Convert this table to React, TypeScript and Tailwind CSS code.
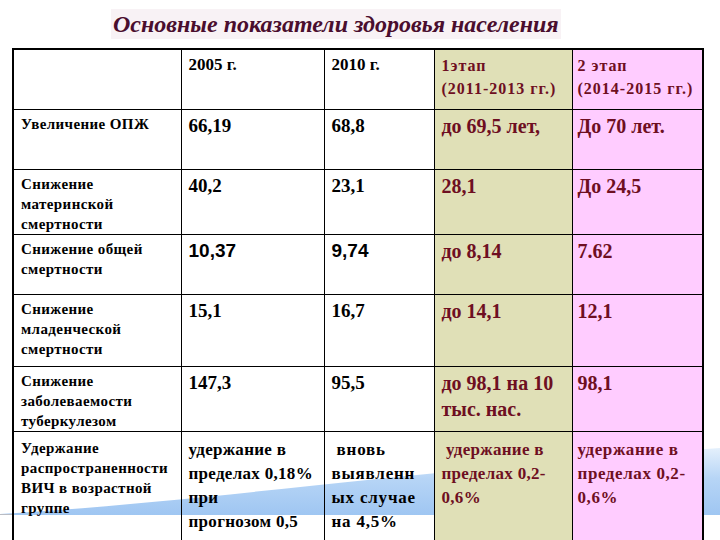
const LABEL = 'text-[15px] leading-[20px] tracking-[0.4px]'
const NUM = 'text-[19px] leading-[24px]'
const STAGE_NUM = 'text-[20px] leading-[24px]'
const LONG = 'text-[17px] leading-[20px] tracking-[0.3px]'
const STAGE = 'text-[#6e0f22]'

interface Row {
  key: string
  height: string
  label: string[]
  y2005: React.ReactNode
  y2010: React.ReactNode
  stage1: React.ReactNode
  stage2: React.ReactNode
}

const rows: Row[] = [
  {
    key: 'opzh',
    height: 'h-[60px]',
    label: ['Увеличение ОПЖ'],
    y2005: <span className={NUM}>66,19</span>,
    y2010: <span className={NUM}>68,8</span>,
    stage1: <span className={STAGE_NUM}>до 69,5 лет,</span>,
    stage2: <span className={STAGE_NUM}>До 70 лет.</span>,
  },
  {
    key: 'mat',
    height: 'h-[62px]',
    label: ['Снижение', 'материнской', 'смертности'],
    y2005: <span className={NUM}>40,2</span>,
    y2010: <span className={NUM}>23,1</span>,
    stage1: <span className={STAGE_NUM}>28,1</span>,
    stage2: <span className={STAGE_NUM}>До 24,5</span>,
  },
  {
    key: 'all',
    height: 'h-[60px]',
    label: ['Снижение общей', 'смертности'],
    y2005: <span className="font-['Liberation_Sans',sans-serif] text-[19px] leading-[24px]">10,37</span>,
    y2010: <span className="font-['Liberation_Sans',sans-serif] text-[19px] leading-[24px]">9,74</span>,
    stage1: <span className={STAGE_NUM}>до 8,14</span>,
    stage2: <span className={STAGE_NUM}>7.62</span>,
  },
  {
    key: 'inf',
    height: 'h-[72px]',
    label: ['Снижение', 'младенческой', 'смертности'],
    y2005: <span className={NUM}>15,1</span>,
    y2010: <span className={NUM}>16,7</span>,
    stage1: <span className={STAGE_NUM}>до 14,1</span>,
    stage2: <span className={STAGE_NUM}>12,1</span>,
  },
  {
    key: 'tb',
    height: 'h-[61px]',
    label: ['Снижение', 'заболеваемости', 'туберкулезом'],
    y2005: <span className={NUM}>147,3</span>,
    y2010: <span className={NUM}>95,5</span>,
    stage1: (
      <span className={STAGE_NUM}>
        до 98,1 на 10
        <br />
        тыс. нас.
      </span>
    ),
    stage2: <span className={STAGE_NUM}>98,1</span>,
  },
  {
    key: 'hiv',
    height: 'h-[120px]',
    label: ['Удержание', 'распространенности', 'ВИЧ в возрастной', 'группе'],
    y2005: (
      <span className={LONG}>
        удержание в<br />
        пределах 0,18%<br />
        при<br />
        прогнозом 0,5
      </span>
    ),
    y2010: (
      <span className={`${LONG} tracking-[0.8px]`}>
        &nbsp;вновь<br />
        выявленн<br />
        ых случае<br />
        на 4,5%
      </span>
    ),
    stage1: (
      <span className={LONG}>
        &nbsp;удержание в<br />
        пределах 0,2-<br />
        0,6%
      </span>
    ),
    stage2: (
      <span className={`${LONG} tracking-[0.6px]`}>
        удержание в<br />
        пределах 0,2-<br />
        0,6%
      </span>
    ),
  },
]

// Декоративная голубая волна внизу слайда, лежит под таблицей.
function Wave() {
  return (
    <svg className="absolute left-0 top-[440px] w-[720px] h-[80px]" viewBox="0 0 720 80" aria-hidden>
      <defs>
        <linearGradient id="wave" x1="0" y1="0" x2="0" y2="1">
          <stop offset="0" stopColor="#e4f0fc" />
          <stop offset="0.45" stopColor="#b7d5f6" />
          <stop offset="1" stopColor="#9fc6f2" />
        </linearGradient>
      </defs>
      <path d="M0 74 C 200 62, 420 30, 720 8 L 720 75 L 0 75 Z" fill="url(#wave)" />
      <line x1="0" y1="74.5" x2="14" y2="74.5" stroke="#b9bcc4" strokeWidth="1" />
    </svg>
  )
}

export default function App() {
  const cell = 'border border-black align-top px-[7px] pt-[4px] font-bold'
  return (
    <div className="relative w-[720px] h-[540px] overflow-hidden bg-white font-['Liberation_Serif',serif] text-black">
      <Wave />
      <div className="relative h-[48px] pl-[111px] pt-[9px]">
        <h1 className="inline-block bg-[#f8f2f5] px-[2px] text-[24px] leading-[30px] font-bold italic text-[#4a0e2e]">
          Основные показатели здоровья населения
        </h1>
      </div>
      <table className="relative ml-[12px] w-[690px] table-fixed border-collapse border-2 border-black">
        <colgroup>
          <col className="w-[168px]" />
          <col className="w-[143px]" />
          <col className="w-[110px]" />
          <col className="w-[138px]" />
          <col className="w-[131px]" />
        </colgroup>
        <tbody>
          <tr className="h-[60px]">
            <td className={cell} />
            <td className={`${cell} text-[17px] leading-[22px]`}>2005 г.</td>
            <td className={`${cell} text-[17px] leading-[22px]`}>2010 г.</td>
            <td className={`${cell} bg-[#e0e0b7] ${STAGE} text-[16px] leading-[23px] tracking-[1px]`}>
              1этап
              <br />
              (2011-2013 гг.)
            </td>
            <td className={`${cell} bg-[#ffccff] ${STAGE} text-[16px] leading-[23px] tracking-[1px] pl-[5px]`}>
              2 этап
              <br />
              (2014-2015 гг.)
            </td>
          </tr>
          {rows.map((row) => {
            const pad = row.key === 'hiv' ? 'pt-[6px]' : ''
            return (
              <tr key={row.key} className={row.height}>
                <td className={`${cell} ${LABEL} ${pad}`}>
                  {row.label.map((line) => (
                    <div key={line}>{line}</div>
                  ))}
                </td>
                <td className={`${cell} ${pad}`}>{row.y2005}</td>
                <td className={`${cell} ${pad}`}>{row.y2010}</td>
                <td className={`${cell} bg-[#e0e0b7] ${STAGE} ${pad}`}>{row.stage1}</td>
                <td className={`${cell} bg-[#ffccff] ${STAGE} pl-[5px] ${pad}`}>{row.stage2}</td>
              </tr>
            )
          })}
        </tbody>
      </table>
    </div>
  )
}
